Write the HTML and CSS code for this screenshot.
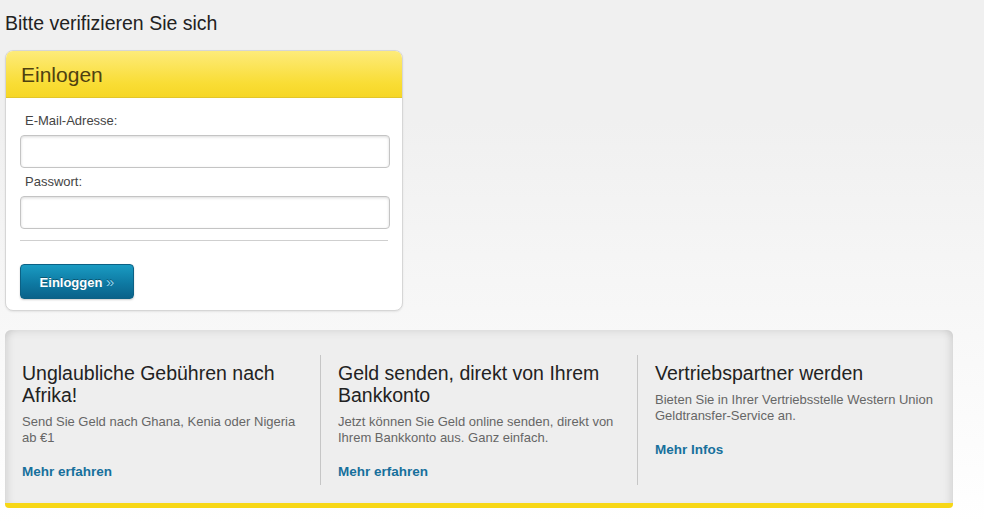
FILE: index.html
```html
<!DOCTYPE html>
<html lang="de">
<head>
  <meta charset="UTF-8">
  <title>Bitte verifizieren Sie sich</title>
  <link rel="stylesheet" href="styles.css">
</head>
<body>
  <div class="page">
    <h1 class="page-title">Bitte verifizieren Sie sich</h1>

    <div class="login-box">
      <div class="login-head">Einlogen</div>
      <form class="login-body" onsubmit="return false">
        <label class="field-label" for="email">E-Mail-Adresse:</label>
        <input class="field" id="email" type="text">
        <label class="field-label" for="pass">Passwort:</label>
        <input class="field" id="pass" type="password">
        <div class="divider"></div>
        <button class="login-button" type="submit">Einloggen <span class="arrows">»</span></button>
      </form>
    </div>

    <div class="promo">
      <div class="promo-col">
        <h3>Unglaubliche Gebühren nach Afrika!</h3>
        <p>Send Sie Geld nach Ghana, Kenia oder Nigeria ab €1</p>
        <a href="#">Mehr erfahren</a>
      </div>
      <div class="promo-col">
        <h3>Geld senden, direkt von Ihrem Bankkonto</h3>
        <p>Jetzt können Sie Geld online senden, direkt von Ihrem Bankkonto aus. Ganz einfach.</p>
        <a href="#">Mehr erfahren</a>
      </div>
      <div class="promo-col">
        <h3>Vertriebspartner werden</h3>
        <p>Bieten Sie in Ihrer Vertriebsstelle Western Union Geldtransfer-Service an.</p>
        <a href="#">Mehr Infos</a>
      </div>
    </div>
  </div>
</body>
</html>
```

FILE: styles.css
```css
html, body {
  margin: 0;
  padding: 0;
}

body {
  font-family: "Liberation Sans", Arial, sans-serif;
  color: #222;
  min-height: 524px;
  background: linear-gradient(to bottom, #f0f0f0 0, #f0f0f0 120px, #ffffff 524px);
}

.page {
  padding: 0 5px;
}

.page-title {
  font-size: 19.5px;
  font-weight: normal;
  margin: 0;
  padding-top: 12px;
  line-height: 22px;
  color: #222;
}

/* login box */
.login-box {
  width: 396px;
  margin-top: 16px;
  background: #fff;
  border: 1px solid #d6d6d6;
  border-radius: 8px;
  box-shadow: 0 1px 2px rgba(0, 0, 0, 0.08);
  overflow: hidden;
}

.login-head {
  height: 46px;
  line-height: 48px;
  padding-left: 15px;
  font-size: 21px;
  color: #4f4110;
  background: linear-gradient(to bottom, #fdeb7a 0, #f9dd35 70%, #f6d626 100%);
  border-bottom: 1px solid #e2c62a;
}

.login-body {
  display: flex;
  flex-direction: column;
  padding: 15px 14px 11px 14px;
  margin: 0;
}

.field-label {
  font-size: 13px;
  color: #444;
  padding-left: 5px;
  line-height: 16px;
  margin-bottom: 6px;
}

.field {
  width: 370px;
  height: 33px;
  box-sizing: border-box;
  border: 1px solid #c4c4c4;
  border-radius: 4px;
  box-shadow: inset 0 1px 3px rgba(0, 0, 0, 0.15);
  margin: 0 0 6px 0;
  font-family: inherit;
  font-size: 13px;
  padding: 0 6px;
}

.divider {
  width: 368px;
  height: 1px;
  background: #cfcfcf;
  margin: 5px 0 23px 0;
}

.login-button {
  align-self: flex-start;
  width: 114px;
  height: 35px;
  border: 1px solid #0c6185;
  border-radius: 4px;
  background: linear-gradient(to bottom, #1a9bc2 0, #0e7aa3 55%, #0a628a 100%);
  box-shadow: 0 1px 2px rgba(0, 0, 0, 0.2);
  color: #fff;
  font-family: inherit;
  font-size: 13px;
  font-weight: bold;
  text-shadow: 0 -1px 0 rgba(0, 0, 0, 0.35);
  cursor: pointer;
  padding: 0;
}

.arrows {
  color: #8fd3ee;
  font-weight: normal;
  font-size: 15px;
}

/* promo strip */
.promo {
  width: 948px;
  margin-top: 19px;
  box-sizing: border-box;
  height: 178px;
  display: grid;
  grid-template-columns: 315px 317px 1fr;
  padding: 25px 0 18px 0;
  background: #eeeeee;
  border-radius: 6px 6px 4px 4px;
  border-bottom: 5px solid #f7d716;
  box-shadow: inset 0 8px 8px -6px rgba(0, 0, 0, 0.08),
              inset 8px 0 8px -6px rgba(0, 0, 0, 0.12),
              inset -8px 0 8px -6px rgba(0, 0, 0, 0.12);
}

.promo-col {
  padding: 7px 16px 0 17px;
  border-left: 1px solid #c6c6c6;
}

.promo-col:first-child {
  border-left: none;
}

.promo-col h3 {
  margin: 0 0 8px 0;
  font-size: 19.5px;
  font-weight: normal;
  line-height: 22px;
  color: #222;
}

.promo-col p {
  margin: 0 0 18px 0;
  font-size: 13px;
  line-height: 16px;
  color: #666;
}

.promo-col a {
  display: block;
  font-size: 13.5px;
  font-weight: bold;
  line-height: 16px;
  color: #17709c;
  text-decoration: none;
}
```
